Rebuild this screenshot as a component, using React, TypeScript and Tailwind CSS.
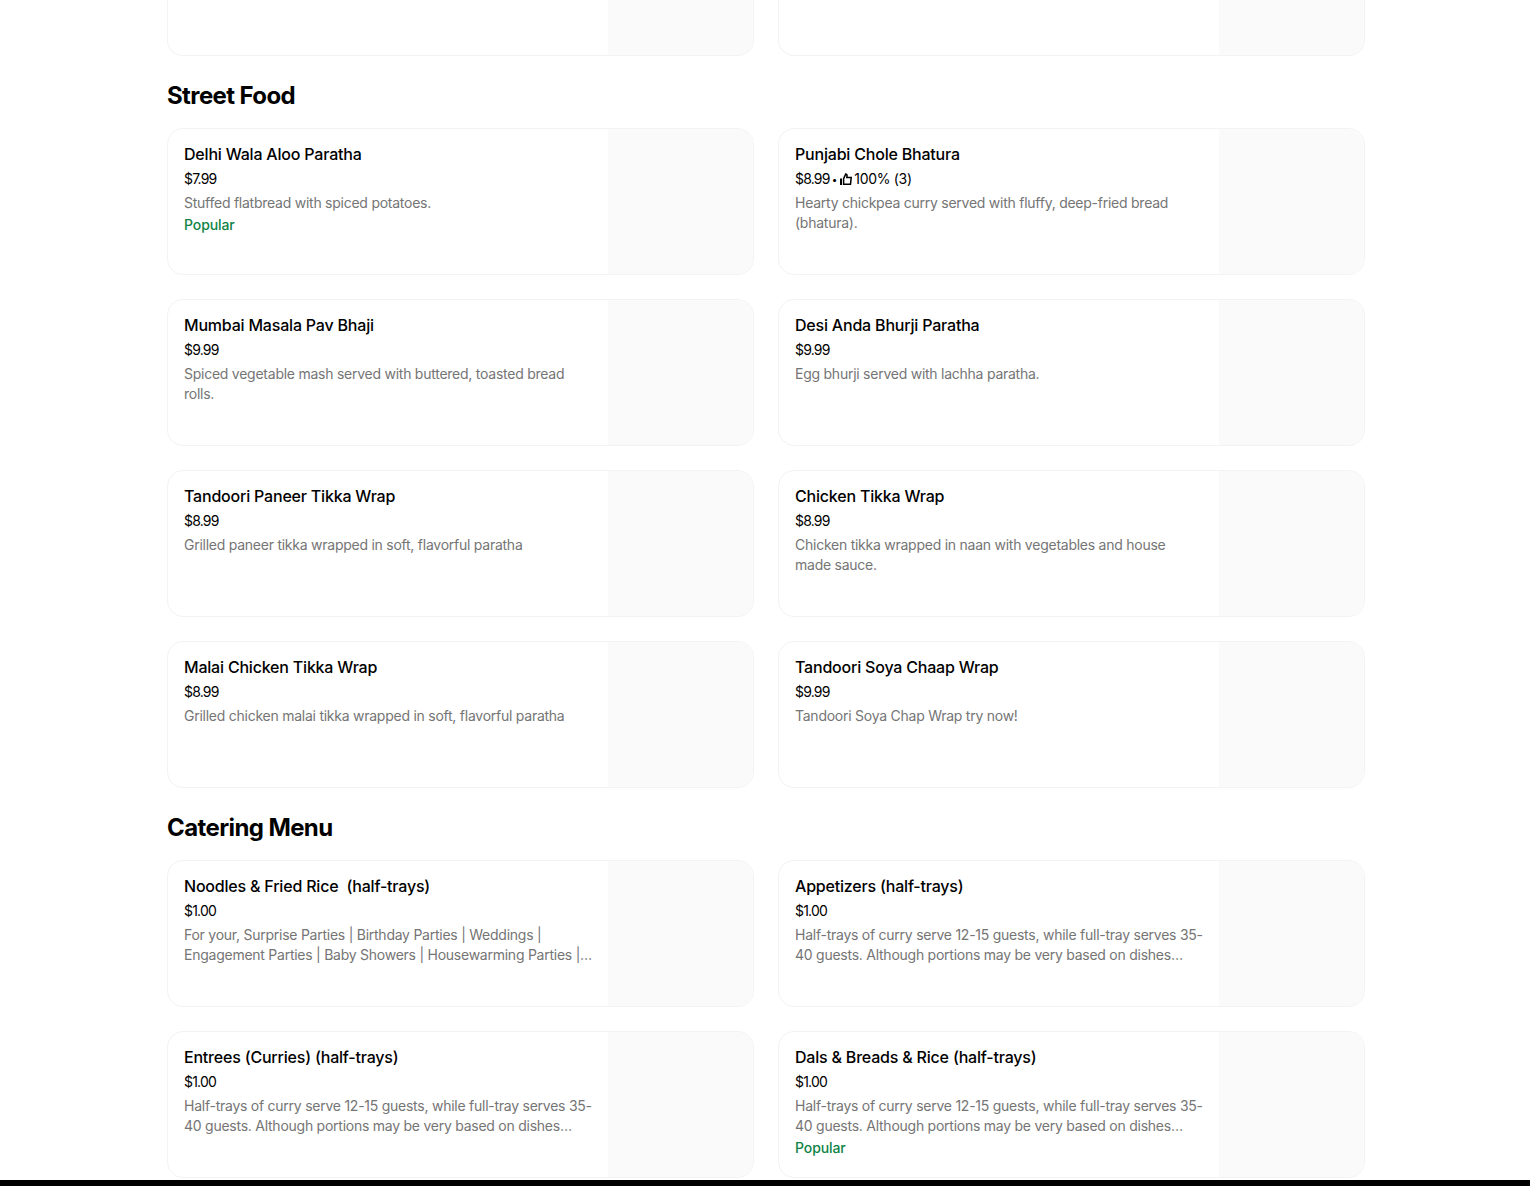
import React from 'react';

interface Item {
  name: string;
  price: string;
  desc: string;
  rating?: string;
  popular?: boolean;
}

// the zero width space lets the range wrap after its hyphen, as in the listing
const TRAY_DESC =
  'Half-trays of curry serve 12-15 guests, while full-tray serves 35-\u200B40 guests. Although portions may be very based on dishes…';

const streetFood: Item[] = [
  { name: 'Delhi Wala Aloo Paratha', price: '$7.99', desc: 'Stuffed flatbread with spiced potatoes.', popular: true },
  { name: 'Punjabi Chole Bhatura', price: '$8.99', rating: '100% (3)', desc: 'Hearty chickpea curry served with fluffy, deep-fried bread (bhatura).' },
  { name: 'Mumbai Masala Pav Bhaji', price: '$9.99', desc: 'Spiced vegetable mash served with buttered, toasted bread rolls.' },
  { name: 'Desi Anda Bhurji Paratha', price: '$9.99', desc: 'Egg bhurji served with lachha paratha.' },
  { name: 'Tandoori Paneer Tikka Wrap', price: '$8.99', desc: 'Grilled paneer tikka wrapped in soft, flavorful paratha' },
  { name: 'Chicken Tikka Wrap', price: '$8.99', desc: 'Chicken tikka wrapped in naan with vegetables and house made sauce.' },
  { name: 'Malai Chicken Tikka Wrap', price: '$8.99', desc: 'Grilled chicken malai tikka wrapped in soft, flavorful paratha' },
  { name: 'Tandoori Soya Chaap Wrap', price: '$9.99', desc: 'Tandoori Soya Chap Wrap try now!' },
];

const catering: Item[] = [
  { name: 'Noodles & Fried Rice\u00A0\u00A0(half-trays)', price: '$1.00', desc: 'For your, Surprise Parties | Birthday Parties | Weddings | Engagement Parties | Baby Showers | Housewarming Parties |…' },
  { name: 'Appetizers (half-trays)', price: '$1.00', desc: TRAY_DESC },
  { name: 'Entrees (Curries) (half-trays)', price: '$1.00', desc: TRAY_DESC },
  { name: 'Dals & Breads & Rice (half-trays)', price: '$1.00', desc: TRAY_DESC, popular: true },
];

function ThumbUp() {
  return (
    <svg width="12" height="12" viewBox="0 0 12 12" className="ml-[3px] shrink-0" fill="none">
      <path d="M0 5.5h2V12H0z" fill="#000" />
      <path d="M3.6 5.6 5.8.9c1 .2 1.4.8 1.3 1.8l-.3 1.9h4.4l-.7 6.6H3.6z" stroke="#000" strokeWidth="1.5" />
    </svg>
  );
}

function MenuCard({ item }: { item: Item }) {
  return (
    <div className="flex h-[147px] overflow-hidden rounded-2xl border border-[#f3f3f3] bg-white">
      <div className="min-w-0 flex-1 pl-4 pr-[14px] pt-[13px]">
        <div className="text-base leading-6 font-medium tracking-[-0.2px] text-black">{item.name}</div>
        <div className="mt-[3px] flex items-center text-sm leading-5 text-black">
          <span className="tracking-[-0.8px]">{item.price}</span>
          {item.rating && (
            <>
              <span className="ml-[2px] text-[10px]">•</span>
              <ThumbUp />
              <span className="ml-[2px] tracking-[-0.3px]">{item.rating}</span>
            </>
          )}
        </div>
        <div className="mt-1 text-sm leading-5 tracking-[-0.25px] text-[#757575]">{item.desc}</div>
        {item.popular && <div className="mt-0.5 text-sm leading-5 font-medium tracking-[-0.1px] text-[#0e8345]">Popular</div>}
      </div>
      <div className="w-[145px] shrink-0 bg-[#fafafa]" />
    </div>
  );
}

function Section({ title, items }: { title: string; items: Item[] }) {
  return (
    <section>
      <h2 className="pt-6 pb-4 text-2xl leading-8 font-bold tracking-[-0.025em] text-black">{title}</h2>
      <div className="grid grid-cols-2 gap-6">
        {items.map((item) => (
          <MenuCard key={item.name} item={item} />
        ))}
      </div>
    </section>
  );
}

export default function App() {
  return (
    <div className="flex h-[1186px] flex-col overflow-hidden bg-white font-['Inter','Liberation_Sans',sans-serif]">
      <div className="min-h-0 flex-1 overflow-hidden">
        <div className="ml-[167px] w-[1198px]">
          {/* cards scrolled off the top */}
          <div className="grid grid-cols-2 gap-6">
            <div className="flex h-[56px] overflow-hidden rounded-b-2xl border border-t-0 border-[#f3f3f3]">
              <div className="flex-1" />
              <div className="w-[145px] bg-[#fafafa]" />
            </div>
            <div className="flex h-[56px] overflow-hidden rounded-b-2xl border border-t-0 border-[#f3f3f3]">
              <div className="flex-1" />
              <div className="w-[145px] bg-[#fafafa]" />
            </div>
          </div>
          <Section title="Street Food" items={streetFood} />
          <Section title="Catering Menu" items={catering} />
        </div>
      </div>
      <div className="h-1.5 shrink-0 bg-black" />
    </div>
  );
}
